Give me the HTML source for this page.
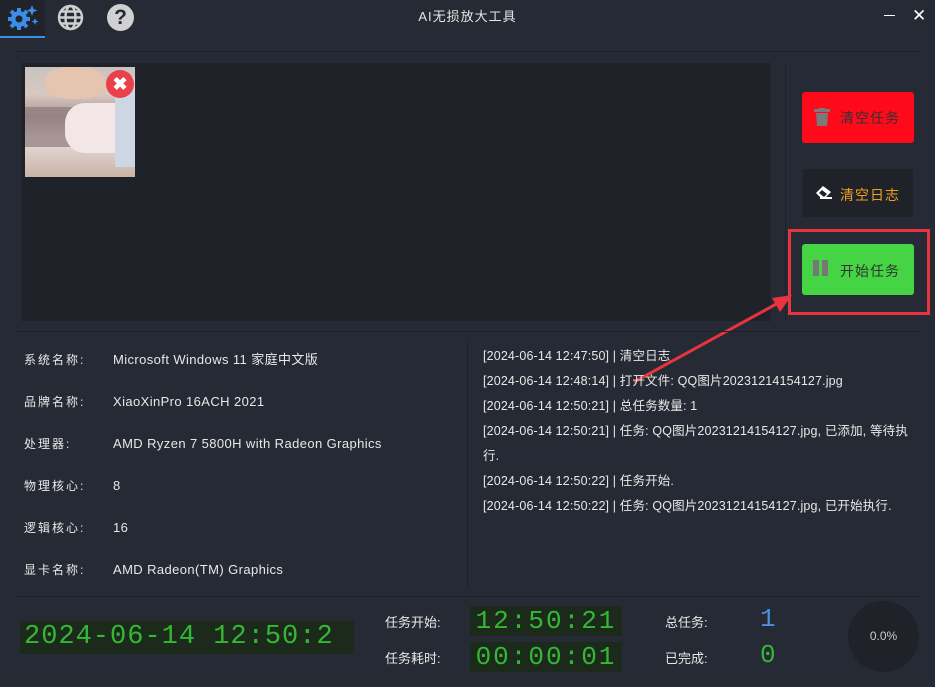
<!DOCTYPE html>
<html><head><meta charset="utf-8"><style>
*{margin:0;padding:0;box-sizing:border-box}
body{width:935px;height:687px;background:#262a34;font-family:"Liberation Sans","Noto Sans CJK SC",sans-serif;color:#e6e6e6;position:relative;overflow:hidden;font-size:12px}
.a{position:absolute}
.led{background:#1c2a1c;color:#34b834;font-family:"Liberation Mono",monospace;letter-spacing:2px}
.lbl{font-size:12px;color:#e8e8e8}
</style></head><body>
<div class="a" style="left:0;top:0;width:45px;height:36px;background:#20232a"></div>
<div class="a" style="left:0;top:36px;width:45px;height:2px;background:#3a8ee6"></div>
<svg class="a" style="left:4px;top:3px" width="36" height="30" viewBox="0 0 36 30">
<g fill="#3a8ee6"><circle cx="15" cy="16" r="8"/><g stroke="#3a8ee6" stroke-width="4"><line x1="15" y1="5" x2="15" y2="27"/><line x1="4" y1="16" x2="26" y2="16"/><line x1="7" y1="8" x2="23" y2="24"/><line x1="23" y1="8" x2="7" y2="24"/></g></g>
<circle cx="15" cy="16" r="3.5" fill="#20232a"/>
<path d="M28 2 l1.5 4 4 1.5 -4 1.5 -1.5 4 -1.5 -4 -4 -1.5 4 -1.5z" fill="#3a8ee6"/>
<path d="M31 15 l1 2.5 2.5 1 -2.5 1 -1 2.5 -1 -2.5 -2.5 -1 2.5 -1z" fill="#3a8ee6"/>
</svg>
<svg class="a" style="left:57px;top:4px" width="27" height="27" viewBox="0 0 27 27" fill="none" stroke="#cfcfcf" stroke-width="2.4">
<circle cx="13.5" cy="13.5" r="11.5"/><ellipse cx="13.5" cy="13.5" rx="5" ry="11.5"/><line x1="2" y1="13.5" x2="25" y2="13.5"/><line x1="4" y1="7.5" x2="23" y2="7.5"/><line x1="4" y1="19.5" x2="23" y2="19.5"/></svg>
<div class="a" style="left:107px;top:4px;width:27px;height:27px;border-radius:50%;background:#d0d0d0;color:#262a34;font-weight:bold;font-size:21px;text-align:center;line-height:27px">?</div>
<div class="a" style="left:0;top:6px;width:935px;text-align:center;font-size:13px;letter-spacing:1px">AI无损放大工具</div>
<div class="a" style="left:884px;top:15px;width:11px;height:1px;background:#fff"></div>
<div class="a" style="left:912px;top:6px;font-size:17px;color:#fff">✕</div>
<div class="a" style="left:14px;top:51px;width:907px;height:1px;background:#1e2128"></div>
<div class="a" style="left:21px;top:63px;width:750px;height:258px;background:#1f2229"></div>
<div class="a" style="left:25px;top:67px;width:110px;height:110px;background:linear-gradient(180deg,#c8c3c0 0%,#d9c8c0 25%,#a69494 45%,#e8dcdc 65%,#c9b3a6 100%);overflow:hidden">
<div class="a" style="left:20px;top:0;width:60px;height:32px;border-radius:40%;background:#e5c4b0"></div>
<div class="a" style="left:0;top:40px;width:50px;height:40px;background:#8e7a7a;opacity:.7"></div>
<div class="a" style="left:40px;top:36px;width:70px;height:50px;background:#f2e6e8;border-radius:20px"></div>
<div class="a" style="left:90px;top:10px;width:20px;height:90px;background:#cdd6e3"></div>
</div>
<div class="a" style="left:106px;top:70px;width:28px;height:28px;border-radius:50%;background:#e8414a;color:#fff;font-weight:bold;font-size:18px;text-align:center;line-height:28px">✖</div>
<div class="a" style="left:785px;top:63px;width:1px;height:258px;background:#1e2128"></div>
<div class="a" style="left:802px;top:92px;width:112px;height:51px;background:#ff0a1a;border-radius:3px"></div>
<svg class="a" style="left:814px;top:108px" width="16" height="18" viewBox="0 0 16 18" fill="#7a7a7a"><rect x="0" y="1" width="16" height="3"/><rect x="5" y="0" width="6" height="2"/><path d="M2 5h12l-1 13H3z"/></svg>
<div class="a" style="left:840px;top:108px;font-size:14px;color:#333;letter-spacing:1px">清空任务</div>
<div class="a" style="left:803px;top:169px;width:110px;height:48px;background:#1f2229"></div>
<svg class="a" style="left:816px;top:186px" width="16" height="13" viewBox="0 0 16 13"><path d="M7 0l8 6-5 5H4L0 7z" fill="#fff"/><path d="M3 7l3-3 5 4-3 3z" fill="#1f2229"/><rect x="4" y="11" width="12" height="2" fill="#fff"/></svg>
<div class="a" style="left:840px;top:185px;font-size:14px;color:#f0a020;letter-spacing:1px">清空日志</div>
<div class="a" style="left:788px;top:229px;width:142px;height:86px;border:3px solid #e8343e"></div>
<div class="a" style="left:802px;top:244px;width:112px;height:51px;background:#44d444;border-radius:3px"></div>
<div class="a" style="left:813px;top:260px;width:6px;height:16px;background:#777"></div>
<div class="a" style="left:822px;top:260px;width:6px;height:16px;background:#777"></div>
<div class="a" style="left:840px;top:261px;font-size:14px;color:#333;letter-spacing:1px">开始任务</div>
<svg class="a" style="left:620px;top:290px" width="180" height="100"><line x1="14" y1="92" x2="160" y2="12" stroke="#e8343e" stroke-width="3"/><path d="M172 5 L152 8 L160 22z" fill="#e8343e"/></svg>
<div class="a" style="left:14px;top:331px;width:907px;height:1px;background:#1e2128"></div>
<div class="a" style="left:467px;top:338px;width:1px;height:250px;background:#1e2128"></div>
<div class="a lbl" style="left:24px;top:339px;line-height:42px;letter-spacing:2px">系统名称:<br>品牌名称:<br>处理器:<br>物理核心:<br>逻辑核心:<br>显卡名称:</div>
<div class="a lbl" style="left:113px;top:339px;line-height:42px;font-size:13px;letter-spacing:0.4px">Microsoft Windows 11 家庭中文版<br>XiaoXinPro 16ACH 2021<br>AMD Ryzen 7 5800H with Radeon Graphics<br>8<br>16<br>AMD Radeon(TM) Graphics</div>
<div class="a lbl" style="left:483px;top:344px;width:450px;line-height:25px;font-size:12.5px;letter-spacing:0.15px;white-space:nowrap">[2024-06-14 12:47:50] | 清空日志<br>[2024-06-14 12:48:14] | 打开文件: QQ图片20231214154127.jpg<br>[2024-06-14 12:50:21] | 总任务数量: 1<br>[2024-06-14 12:50:21] | 任务: QQ图片20231214154127.jpg, 已添加, 等待执<br>行.<br>[2024-06-14 12:50:22] | 任务开始.<br>[2024-06-14 12:50:22] | 任务: QQ图片20231214154127.jpg, 已开始执行.</div>
<div class="a" style="left:14px;top:596px;width:907px;height:1px;background:#1e2128"></div>
<div class="a led" style="left:20px;top:621px;width:334px;height:33px;font-size:27px;line-height:33px;padding-left:4px;letter-spacing:1px;overflow:hidden;white-space:nowrap">2024-06-14 12:50:2</div>
<div class="a lbl" style="left:385px;top:612px;font-size:13px">任务开始:</div>
<div class="a lbl" style="left:385px;top:648px;font-size:13px">任务耗时:</div>
<div class="a led" style="left:470px;top:606px;width:152px;height:30px;font-size:26px;line-height:30px;text-align:center">12:50:21</div>
<div class="a led" style="left:470px;top:642px;width:152px;height:30px;font-size:26px;line-height:30px;text-align:center">00:00:01</div>
<div class="a lbl" style="left:665px;top:612px;font-size:13px">总任务:</div>
<div class="a lbl" style="left:665px;top:648px;font-size:13px">已完成:</div>
<div class="a" style="left:760px;top:604px;font-family:'Liberation Mono',monospace;font-size:26px;color:#4a90e2">1</div>
<div class="a" style="left:760px;top:640px;font-family:'Liberation Mono',monospace;font-size:26px;color:#34b834">0</div>
<div class="a" style="left:848px;top:601px;width:71px;height:71px;border-radius:50%;background:#1f2229;text-align:center;line-height:71px;font-size:12px;color:#ccc">0.0%</div>
</body></html>
